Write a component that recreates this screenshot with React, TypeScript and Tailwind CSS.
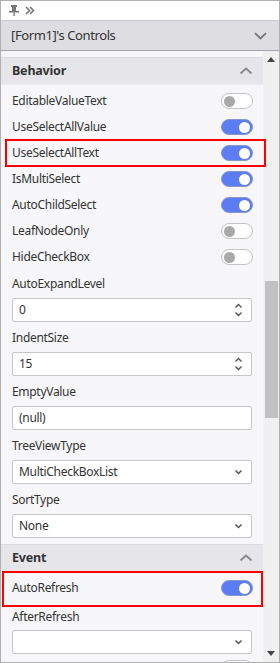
import React from "react";

const font = { fontFamily: '"Noto Sans", "Open Sans", sans-serif' };

function Toggle({ on }: { on: boolean }) {
  return on ? (
    <div className="w-[32px] h-[16px] shrink-0 rounded-full bg-[#5c7cf4] border border-[#8a96c8] flex items-center justify-end pr-[2px]">
      <div className="w-[11px] h-[11px] rounded-full bg-white" />
    </div>
  ) : (
    <div className="w-[32px] h-[16px] shrink-0 rounded-full bg-white border border-[#c4c4c4] flex items-center pl-[2px]">
      <div className="w-[11px] h-[11px] rounded-full bg-[#a9a9a9]" />
    </div>
  );
}

const labelCls = "text-[12px] tracking-[-0.3px] text-[#333]";

function ToggleRow({ label, on, red = false }: { label: string; on: boolean; red?: boolean }) {
  return (
    <div className="relative h-[26px] flex items-center justify-between pl-[11px] pr-[10px]">
      <span className={labelCls}>{label}</span>
      <Toggle on={on} />
      {red && <div className="absolute left-[4px] right-[-3px] top-[-1px] bottom-[-1px] border-2 border-[#f00] pointer-events-none" />}
    </div>
  );
}

function Spin() {
  return (
    <svg width="9" height="14" viewBox="0 0 9 14" fill="none" stroke="#555" strokeWidth="1.4">
      <path d="M1.5 4.5 L4.5 1.5 L7.5 4.5" />
      <path d="M1.5 9.5 L4.5 12.5 L7.5 9.5" />
    </svg>
  );
}

function Chev() {
  return (
    <svg width="9" height="6" viewBox="0 0 9 6" fill="none" stroke="#555" strokeWidth="1.5">
      <path d="M1.5 1.5 L4.5 4.5 L7.5 1.5" />
    </svg>
  );
}

function Field({ label, value, kind, lh = 28 }: { label: string; value: string; kind: "spin" | "select" | "text"; lh?: number }) {
  return (
    <div className="pb-[2px]">
      <div className={"flex items-center pl-[11px] " + labelCls} style={{ height: lh }}>{label}</div>
      <div className="mx-[11px] h-[24px] bg-white border border-[#c8c8c8] rounded-[2px] flex items-center justify-between pl-[6px] pr-[8px]">
        <span className={labelCls}>{value}</span>
        {kind === "spin" && <Spin />}
        {kind === "select" && <Chev />}
      </div>
    </div>
  );
}

function SectionHeader({ title }: { title: string }) {
  return (
    <div className="h-[28px] bg-[#e6e6ea] border-t border-[#dadade] border-b border-b-[#ececef] flex items-center justify-between pl-[11px] pr-[10px]">
      <span className="text-[12.5px] font-bold tracking-[-0.2px] text-[#333]">{title}</span>
      <svg width="14" height="8" viewBox="0 0 14 8" fill="none" stroke="#888" strokeWidth="1.8">
        <path d="M1.5 6.5 L7 1.5 L12.5 6.5" />
      </svg>
    </div>
  );
}

export default function App() {
  return (
    <div style={font} className="w-[280px] h-[663px] overflow-hidden border border-[#b0b0b0] bg-white flex flex-col">
      {/* top bar */}
      <div className="h-[19px] shrink-0 bg-white flex items-center pl-[8px] gap-[6px]">
        <svg width="10" height="11" viewBox="0 0 10 11" fill="#777">
          <rect x="2" y="0" width="6" height="2" />
          <rect x="3" y="2" width="4" height="4" />
          <rect x="0" y="6" width="10" height="1.5" />
          <rect x="4.3" y="7.5" width="1.4" height="3.5" />
        </svg>
        <svg width="10" height="9" viewBox="0 0 10 9" fill="none" stroke="#777" strokeWidth="1.6">
          <path d="M1 1 L4.5 4.5 L1 8" />
          <path d="M5 1 L8.5 4.5 L5 8" />
        </svg>
      </div>
      {/* title */}
      <div className="h-[31px] shrink-0 bg-[#dedee2] border-t border-[#c8c8cc] border-b border-b-[#a6a6aa] flex items-center justify-between pl-[10px] pr-[12px]">
        <span className="text-[13px] tracking-[-0.4px] text-[#333]">[Form1]'s Controls</span>
        <svg width="13" height="8" viewBox="0 0 13 8" fill="none" stroke="#777" strokeWidth="1.8">
          <path d="M1 1.2 L6.5 6.5 L12 1.2" />
        </svg>
      </div>
      {/* body */}
      <div className="flex-1 flex min-h-0">
        <div className="flex-1 bg-[#f7f7f9] pt-[6px] relative z-10">
          <SectionHeader title="Behavior" />
          <div className="pt-[3px]">
            <ToggleRow label="EditableValueText" on={false} />
            <ToggleRow label="UseSelectAllValue" on />
            <ToggleRow label="UseSelectAllText" on red />
            <ToggleRow label="IsMultiSelect" on />
            <ToggleRow label="AutoChildSelect" on />
            <ToggleRow label="LeafNodeOnly" on={false} />
            <ToggleRow label="HideCheckBox" on={false} />
            <Field label="AutoExpandLevel" value="0" kind="spin" />
            <Field label="IndentSize" value="15" kind="spin" />
            <Field label="EmptyValue" value="(null)" kind="text" />
            <Field label="TreeViewType" value="MultiCheckBoxList" kind="select" />
            <Field label="SortType" value="None" kind="select" />
          </div>
          <div className="h-[4px]" />
          <SectionHeader title="Event" />
          <div className="relative h-[32px] flex items-center justify-between pl-[11px] pr-[10px]">
            <span className={labelCls}>AutoRefresh</span>
            <Toggle on />
            <div className="absolute left-[1px] right-0 top-[-1px] bottom-[-3px] border-2 border-[#f00]" />
          </div>
          <Field label="AfterRefresh" value="" kind="select" lh={26} />
          <div className="h-[26px] flex items-start justify-end pr-[10px] pt-[4px]">
            <Toggle on={false} />
          </div>
        </div>
        {/* scrollbar */}
        <div className="w-[16px] shrink-0 bg-[#f0f0f0] flex flex-col items-center relative">
          <div className="h-[17px] flex items-center justify-center">
            <svg width="8" height="5" viewBox="0 0 8 5" fill="#444"><path d="M0 5 L4 0 L8 5 Z" /></svg>
          </div>
          <div className="h-[213px]" />
          <div className="w-[13px] h-[137px] bg-[#c1c1c1]" />
          <div className="flex-1" />
          <div className="h-[17px] flex items-center justify-center">
            <svg width="8" height="5" viewBox="0 0 8 5" fill="#444"><path d="M0 0 L4 5 L8 0 Z" /></svg>
          </div>
        </div>
      </div>
    </div>
  );
}
